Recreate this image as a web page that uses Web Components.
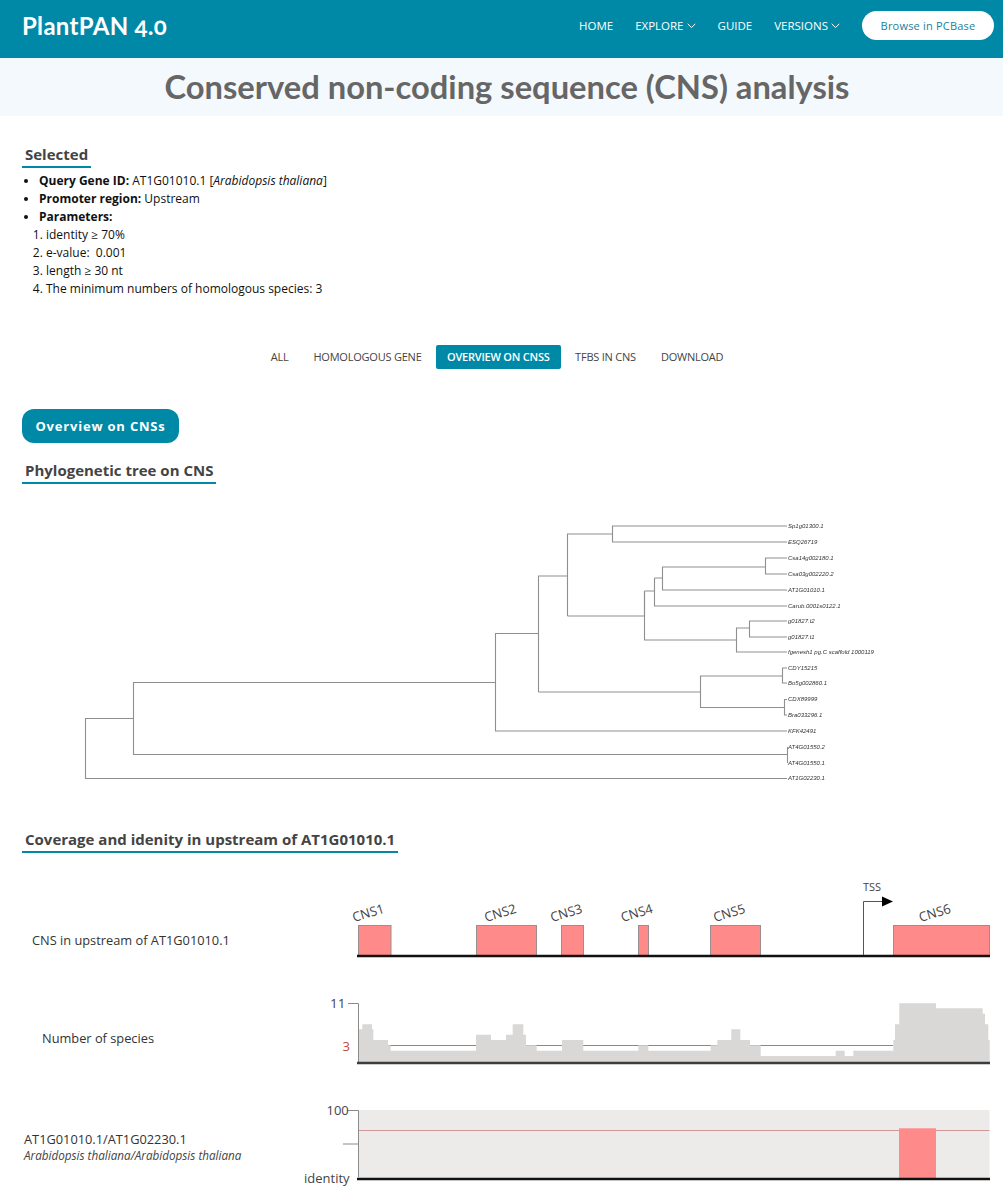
<!DOCTYPE html>
<html lang="en">
<head>
<meta charset="utf-8">
<title>PlantPAN 4.0</title>
<style>
  html, body { margin: 0; padding: 0; background: #fff; overflow: hidden; }
  body { font-family: "Open Sans", "Noto Sans", sans-serif; color: #222; height: 1195px; }
  cns-track em { font-size: 11.7px; color: #444; }
</style>
</head>
<body>

<plant-navbar></plant-navbar>
<page-hero>Conserved non-coding sequence (CNS) analysis</page-hero>

<section-heading style="margin-top:28px">Selected</section-heading>
<selected-info></selected-info>

<tab-bar active="OVERVIEW ON CNSS"></tab-bar>

<pill-label>Overview on CNSs</pill-label>
<section-heading style="margin-top:17px">Phylogenetic tree on CNS</section-heading>
<phylo-tree></phylo-tree>

<section-heading style="margin-top:25px">Coverage and idenity in upstream of AT1G01010.1</section-heading>

<cns-track indent="32" drop="57" height="90" style="margin-top:22px">
  <span>CNS in upstream of AT1G01010.1</span>
  <svg slot="chart" viewBox="300 875 703 90" width="703" height="90">
    <g fill="#ff8a8a" stroke="#9a8f8f" stroke-width="1">
      <rect x="358.5" y="925.5" width="32.5" height="30"/>
      <rect x="476.5" y="925.5" width="60" height="30"/>
      <rect x="561.5" y="925.5" width="22" height="30"/>
      <rect x="638.5" y="925.5" width="10" height="30"/>
      <rect x="710.5" y="925.5" width="50" height="30"/>
      <rect x="893.5" y="925.5" width="96" height="30"/>
    </g>
    <path d="M357 956H990" stroke="#111" stroke-width="2.6"/>
    <path d="M863.5 955V901.5H883" fill="none" stroke="#555" stroke-width="1"/>
    <path d="M882 896.5L893 901.5L882 906.5Z" fill="#000"/>
    <g font-family="Open Sans, sans-serif" font-size="13" fill="#444">
      <text transform="translate(354 922) rotate(-17)">CNS1</text>
      <text transform="translate(486 922) rotate(-17)">CNS2</text>
      <text transform="translate(552 922) rotate(-17)">CNS3</text>
      <text transform="translate(622.5 922) rotate(-17)">CNS4</text>
      <text transform="translate(715 922) rotate(-17)">CNS5</text>
      <text transform="translate(920.5 922) rotate(-17)">CNS6</text>
      <text x="863" y="891" font-size="11">TSS</text>
    </g>
  </svg>
</cns-track>

<cns-track indent="42" drop="40" height="85" style="margin-top:25px">
  <span>Number of species</span>
  <svg slot="chart" viewBox="300 990 703 85" width="703" height="85">
    <path d="M358 1045.5H893" stroke="#d26a6a" stroke-width="1"/>
    <path fill="#d9d8d7" d="M358 1063V1029.3H362.3V1024.3H372V1029.3H373.3V1040H388V1045.3H390.7V1050.7H476V1034.7H491V1040H506V1034.7H512.7V1024.3H523.3V1034.7H526V1045.3H536.7V1050.7H562V1040H583.3V1050.7H638.3V1045.3H648.3V1050.7H710.7V1045.3H717.3V1040H731.3V1029.3H740.3V1040H750V1045.3H760.7V1056H835.7V1050.7H844.7V1056H853.3V1050.7H893.3V1040H895V1024.3H899.3V1003.3H936V1008.3H982.7V1013.7H985V1024.3H988.3V1040H989.7V1063Z"/>
    <path d="M348 1003.5H358.5V1062" fill="none" stroke="#8a8a8a" stroke-width="1"/>
    <path d="M357 1063H990" stroke="#3c3c3c" stroke-width="2.6"/>
    <text x="330" y="1007.5" font-family="Open Sans, sans-serif" font-size="13.5" fill="#444">11</text>
    <text x="342.5" y="1051" font-family="Open Sans, sans-serif" font-size="13" fill="#c0474a">3</text>
  </svg>
</cns-track>

<cns-track indent="24" drop="31" height="95" style="margin-top:25px">
  <span>AT1G01010.1/AT1G02230.1<br><em>Arabidopsis thaliana/Arabidopsis thaliana</em></span>
  <svg slot="chart" viewBox="300 1100 703 95" width="703" height="95">
    <rect x="358" y="1110" width="631.5" height="68" fill="#ecebea"/>
    <path d="M358 1130.5H989.5" stroke="#cf9896" stroke-width="1"/>
    <rect x="899" y="1128.3" width="37" height="50" fill="#ff8a8a"/>
    <path d="M347 1110.5H358.5V1177M343 1144H358" fill="none" stroke="#8a8a8a" stroke-width="1"/>
    <path d="M357 1179H990" stroke="#111" stroke-width="2.6"/>
    <g font-family="Open Sans, sans-serif" font-size="13" fill="#444">
      <text x="326.5" y="1115">100</text>
      <text x="304" y="1183">identity</text>
    </g>
  </svg>
</cns-track>

<script>
const TEAL = '#0089a7'

customElements.define('plant-navbar', class extends HTMLElement {
  constructor() {
    super()
    const chevron = `<svg width="9" height="6" viewBox="0 0 9 6"><path d="M.7.8l3.8 3.8L8.3.8" fill="none" stroke="#fff" stroke-width="1"/></svg>`
    this.attachShadow({ mode: 'open' }).innerHTML = `
      <style>
        :host { display: flex; align-items: center; height: 58px; background: ${TEAL}; padding: 0 9px 7px 22px; box-sizing: border-box; }
        .logo { font: 700 24px Lato, sans-serif; color: #fff; letter-spacing: .3px; font-variant-numeric: oldstyle-nums; margin-right: auto; }
        nav { display: flex; align-items: center; gap: 22px; font-size: 11.5px; color: #fff; }
        nav span { display: flex; align-items: center; gap: 3px; }
        .cta { width: 132px; height: 29px; background: #fff; border-radius: 15px; color: #1a7f9c; display: flex; align-items: center; justify-content: center; font-size: 11px; letter-spacing: .2px; }
      </style>
      <div class="logo">PlantPAN 4.0</div>
      <nav>
        <span>HOME</span>
        <span>EXPLORE ${chevron}</span>
        <span>GUIDE</span>
        <span>VERSIONS ${chevron}</span>
        <div class="cta">Browse in PCBase</div>
      </nav>`
  }
})

customElements.define('page-hero', class extends HTMLElement {
  constructor() {
    super()
    this.attachShadow({ mode: 'open' }).innerHTML = `
      <style>
        :host { display: block; height: 58px; background: #f4f9fd; text-align: center; font: 700 32.7px/58px Lato, sans-serif; color: #666; padding-left: 11px; box-sizing: border-box; }
      </style>
      <slot></slot>`
  }
})

customElements.define('section-heading', class extends HTMLElement {
  constructor() {
    super()
    this.attachShadow({ mode: 'open' }).innerHTML = `
      <style>
        :host { display: block; padding-left: 22px; }
        div { display: inline-block; vertical-align: top; padding: 0 3px 2px; border-bottom: 2px solid ${TEAL}; font-size: 15px; line-height: 20px; font-weight: 700; color: #444; }
      </style>
      <div><slot></slot></div>`
  }
})

customElements.define('selected-info', class extends HTMLElement {
  constructor() {
    super()
    this.attachShadow({ mode: 'open' }).innerHTML = `
      <style>
        :host { display: block; padding-left: 39px; margin-top: 4px; font-size: 12px; line-height: 18px; color: #111; }
        ul, ol { margin: 0; padding: 0; }
        ol { margin-left: -22px; padding-left: 29px; }
      </style>
      <ul>
        <li><b>Query Gene ID:</b> AT1G01010.1 [<i>Arabidopsis thaliana</i>]</li>
        <li><b>Promoter region:</b> Upstream</li>
        <li><b>Parameters:</b></li>
      </ul>
      <ol>
        <li>identity ≥ 70%</li>
        <li>e-value:&nbsp; 0.001</li>
        <li>length ≥ 30 nt</li>
        <li>The minimum numbers of homologous species: 3</li>
      </ol>`
  }
})

customElements.define('tab-bar', class extends HTMLElement {
  constructor() {
    super()
    const tabs = ['ALL', 'HOMOLOGOUS GENE', 'OVERVIEW ON CNSS', 'TFBS IN CNS', 'DOWNLOAD']
    const active = this.getAttribute('active')
    const items = tabs.map(t => `<a class="${t === active ? 'on' : ''}">${t}</a>`).join('')
    this.attachShadow({ mode: 'open' }).innerHTML = `
      <style>
        :host { display: flex; justify-content: center; margin-top: 47px; padding-right: 9px; }
        a { padding: 0 12.5px; height: 24px; line-height: 24px; font-size: 11px; letter-spacing: -.22px; color: #444; border-radius: 2px; }
        a.on { background: ${TEAL}; color: #fff; font-weight: 600; padding: 0 11px; margin: 0 2px; }
      </style>
      ${items}`
  }
})

customElements.define('pill-label', class extends HTMLElement {
  constructor() {
    super()
    this.attachShadow({ mode: 'open' }).innerHTML = `
      <style>
        :host { display: block; padding-left: 22px; margin-top: 40px; }
        div { display: flex; align-items: center; justify-content: center; width: 157px; height: 34px; border-radius: 12px; background: ${TEAL}; color: #fff; font-size: 13px; font-weight: 700; letter-spacing: .8px; }
      </style>
      <div><slot></slot></div>`
  }
})

customElements.define('phylo-tree', class extends HTMLElement {
  constructor() {
    super()
    const leaves = [
      ['Sp1g01300.1', 526], ['ESQ26719', 542], ['Csa14g002180.1', 558], ['Csa03g002220.2', 574],
      ['AT1G01010.1', 590], ['Carub.0001s0122.1', 606], ['g01827.t2', 621], ['g01827.t1', 637],
      ['fgenesh1 pg.C scaffold 1000119', 652], ['CDY15215', 668], ['Bo5g002860.1', 683],
      ['CDX89999', 699], ['Bra033296.1', 715], ['KFK42491', 731], ['AT4G01550.2', 747],
      ['AT4G01550.1', 763], ['AT1G02230.1', 778]
    ]
    const labels = leaves.map(([name, y]) => `<text x="788" y="${y + 2}">${name}</text>`).join('')
    this.attachShadow({ mode: 'open' }).innerHTML = `
      <style>
        :host { display: block; height: 306px; margin-top: 14px; }
        svg { display: block; filter: blur(.35px); }
        text { font: italic 6px "Liberation Sans", sans-serif; fill: #333; }
      </style>
      <svg width="1003" height="306" viewBox="0 498 1003 306">
        <g fill="none" stroke="#8f8f8f" stroke-width="1.1">
          <path d="M787 526H612.5V542H787"/>
          <path d="M612.5 534H567.5V616"/>
          <path d="M567.5 576H538.5V692"/>
          <path d="M538.5 633.5H495.5V731H787"/>
          <path d="M495.5 682.5H133.5V754.5H787"/>
          <path d="M133.5 718.5H85.5V778.5H787"/>
          <path d="M567.5 616H644.5V591"/>
          <path d="M644.5 591H654.5V578"/>
          <path d="M654.5 578H662.5V567H765.5V558H787"/>
          <path d="M765.5 567V574H787"/>
          <path d="M662.5 578V590H787"/>
          <path d="M654.5 591V606H787"/>
          <path d="M644.5 591V640H736.5V628H749.5V621H787"/>
          <path d="M749.5 628V637H787"/>
          <path d="M736.5 640V652H787"/>
          <path d="M538.5 692H700.5V676H782.5V668H787"/>
          <path d="M782.5 676V683H787"/>
          <path d="M700.5 692V707.5H784.5V699.5H787"/>
          <path d="M784.5 707.5V715H787"/>
          <path d="M787.5 747V763"/>
        </g>
        ${labels}
      </svg>`
  }
})

customElements.define('cns-track', class extends HTMLElement {
  constructor() {
    super()
    const indent = this.getAttribute('indent')
    const drop = this.getAttribute('drop')
    const height = this.getAttribute('height')
    this.attachShadow({ mode: 'open' }).innerHTML = `
      <style>
        :host { display: grid; grid-template-columns: 300px 703px; height: ${height}px; font-size: 12.8px; color: #333; }
        .label { padding: ${drop}px 0 0 ${indent}px; }
        ::slotted(span) { display: block; line-height: 16px; }
        ::slotted(svg) { display: block; }
      </style>
      <div class="label"><slot></slot></div>
      <slot name="chart"></slot>`
  }
})
</script>
</body>
</html>
